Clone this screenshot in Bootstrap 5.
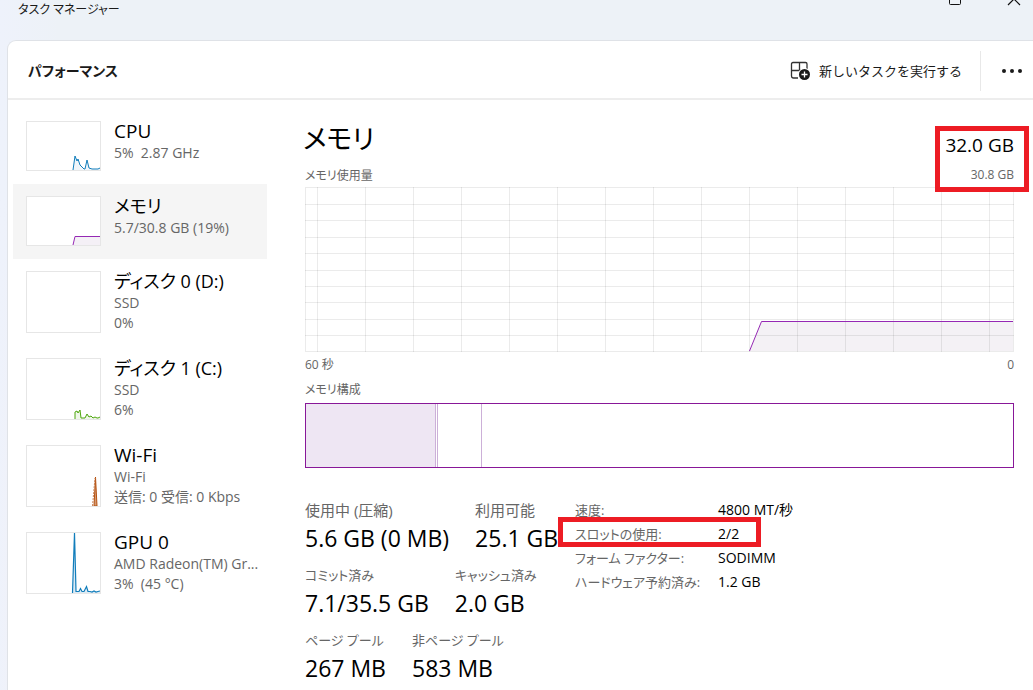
<!DOCTYPE html>
<html lang="ja">
<head>
<meta charset="utf-8">
<meta name="viewport" content="width=device-width, initial-scale=1">
<title>タスク マネージャー</title>
<link href="https://cdn.jsdelivr.net/npm/bootstrap@5.3.0/dist/css/bootstrap.min.css" rel="stylesheet">
<style>
  body { font-family: "Open Sans", "Noto Sans CJK JP", sans-serif; font-feature-settings: "palt"; color: #000; font-size: 14px; line-height: 20px; background: linear-gradient(90deg, #eef2fb 0, rgba(237,242,247,0) 60px), linear-gradient(#edf2f7 0, #edf2f7 42px, #edf2fb 200px, #f2f0f6 320px, #faefee 460px, #faeeee 100%); }
  h1, h2, p, dl, dd, dt { margin: 0; font-weight: 400; line-height: inherit; }
  .app { min-height: 100vh; overflow: hidden; }
  .titlebar { height: 40px; padding-left: 18px; color: #1a1a1a; }
  .titlebar-name { font-size: 12px; }
  .win-controls { margin-right: -10px; }
  .win-btn { width: 58px; height: 20px; padding: 0; border: 0; background: none; display: flex; justify-content: center; }
  .pane { margin-left: 7px; background: #fff; border: solid #dfe2e7; border-width: 1px 0 0 1px; border-top-left-radius: 9px; }
  .toolbar { height: 59px; border-bottom: 2px solid #ededed; padding: 2px 0 0 20px; }
  .toolbar h1 { font-size: 14px; font-weight: 600; color: #1a1a1a; }
  .tool-btn { border: 0; background: none; padding: 0; color: #1a1a1a; display: flex; align-items: center; font-size: 13px; }
  .tool-sep { width: 1px; height: 40px; background: #e8e8e8; margin-left: 18px; }
  .sidebar { width: 254px; margin: 9px 0 0 5px; flex: none; }
  .resource { color: #000; text-decoration: none; padding: 12px 0 13px 13px; gap: 13px; }
  .resource.active { background: #f5f5f5; }
  .thumb { width: 75px; height: 50px; border: 1px solid #e6e6e6; background: #fff; flex: none; display: block; }
  .thumb-tall { height: 62px; }
  .res-title { font-size: 19px; line-height: 20px; margin-bottom: 2px; }
  .res-kana { font-size: 18px; }
  .res-sub { font-size: 14px; color: #666; white-space: nowrap; }
  .detail { margin-left: 38px; padding: 17px 19px 0 0; min-width: 0; }
  .detail h2 { font-size: 27px; line-height: 44px; margin-left: -2px; }
  .caption { font-size: 12px; line-height: 18px; color: #666; padding-top: 4px; }
  .caption-top { padding: 6px 0 2px; }
  .caption-bar { padding: 7px 0 4px; }
  .total { position: absolute; right: 4px; top: 26px; border: 5px solid #ed1c24; padding: 4px 10px 0 5px; height: 66px; text-align: right; }
  .total-main { font-size: 19px; line-height: 20px; }
  .total-sub { font-size: 12px; line-height: 18px; color: #666; margin-top: 11px; }
  .graph { display: block; width: 100%; height: 165px; }
  .composition { height: 65px; border: 1px solid #881798; }
  .composition div { border-right: 1px solid #ccb0d8; }
  .stats { padding-top: 31px; }
  .stat-row { gap: 26px; margin-bottom: 11px; white-space: nowrap; }
  .stat-row dt { font-size: 13px; line-height: 22px; color: #666; }
  .stat-row .dt-kanji { font-size: 15px; }
  .stat-row dd { font-size: 23px; line-height: 29px; margin-top: 3px; }
  .specs { margin-left: 270px; position: absolute; left: 0; top: 30px; white-space: nowrap; }
  .specs th, .specs td { padding: 0; height: 24px; line-height: 24px; font-weight: 400; font-size: 14px; }
  .specs th { width: 143px; color: #666; font-size: 13px; }
  .mark-box { position: absolute; left: -17px; top: -5px; width: 203px; height: 30px; border: 5px solid #ed1c24; pointer-events: none; }
</style>
</head>
<body>
<div class="app d-flex flex-column">
  <header class="titlebar d-flex justify-content-between align-items-start">
    <span class="titlebar-name">タスク マネージャー</span>
    <div class="win-controls d-flex">
      <button class="win-btn" aria-label="最大化"><svg width="14" height="6" viewBox="0 0 14 6"><path d="M.5-7V3.500Q.5 4.500 1.500 4.500H10.500Q11.500 4.500 11.500 3.500V-7" fill="none" stroke="#111"/></svg></button>
      <button class="win-btn" aria-label="閉じる"><svg width="14" height="6" viewBox="0 0 14 6"><path d="M1 5 12-6M13 5 2-6" fill="none" stroke="#111" stroke-width="1.200"/></svg></button>
    </div>
  </header>

  <div class="pane flex-grow-1">
    <div class="toolbar d-flex align-items-center">
      <h1>パフォーマンス</h1>
      <button class="tool-btn ms-auto gap-2">
        <svg width="21" height="20" viewBox="0 0 21 20"><path d="M8 17H3.500Q1.500 17 1.500 15V3Q1.500 1.500 3 1.500H15.500Q17 1.500 17 3V8M9.500 1.500V9.500M1.500 9.500H9.500M9.500 9.500H17" fill="none" stroke="#333" stroke-width="1.300"/><circle cx="14.500" cy="13.500" r="6.500" fill="#fff"/><circle cx="14.500" cy="13.500" r="5.500" fill="#1a1a1a"/><path d="M14.500 10.500V16.500M11.500 13.500H17.500" stroke="#fff" stroke-width="1.300"/></svg>
        <span>新しいタスクを実行する</span>
      </button>
      <span class="tool-sep"></span>
      <button class="tool-btn px-2 ms-2" aria-label="その他"><svg width="28" height="6" viewBox="0 0 28 6" fill="#1a1a1a"><circle cx="7" cy="3" r="2"/><circle cx="15" cy="3" r="2"/><circle cx="23" cy="3" r="2"/></svg></button>
    </div>

    <div class="d-flex">
      <nav class="sidebar" aria-label="リソース">
        <a class="resource d-flex" href="#cpu">
          <svg class="thumb" viewBox="0 0 73 48"><path d="M46 48 48 34 50 38 51 37 54 45 57 48H58L60 38 62 46 65 47H71L73 46V48Z" fill="#eff5fa"/><path d="M46 48 48 34 50 39 51 37 53 43 57 47H58L60 38 62 46 65 47H71L73 46" fill="none" stroke="#117dbb"/></svg>
          <div><div class="res-title">CPU</div><div class="res-sub">5%&nbsp; 2.87 GHz</div></div>
        </a>
        <a class="resource active d-flex" href="#memory" aria-current="page">
          <svg class="thumb" viewBox="0 0 73 48"><path d="M46 48 48 39.500H73V48Z" fill="#f4f0f6"/><path d="M46 48 48 39.500H73" fill="none" stroke="#9528b4"/></svg>
          <div><div class="res-title res-kana">メモリ</div><div class="res-sub">5.7/30.8 GB (19%)</div></div>
        </a>
        <a class="resource d-flex" href="#disk0">
          <svg class="thumb thumb-tall" viewBox="0 0 73 60"></svg>
          <div><div class="res-title res-kana">ディスク 0 (D:)</div><div class="res-sub">SSD<br>0%</div></div>
        </a>
        <a class="resource d-flex" href="#disk1">
          <svg class="thumb thumb-tall" viewBox="0 0 73 60"><path d="M48 60V54L50 52 51 54 53 51 54 59H58L60 55 62 58 64 57 66 59H71L73 58V60Z" fill="#eff7e9"/><path d="M48 60V53L50 52 51 54 53 51 54 59H58L60 55 62 58 64 57 66 59 68 58 70 59H71L73 58" fill="none" stroke="#4da60c"/></svg>
          <div><div class="res-title res-kana">ディスク 1 (C:)</div><div class="res-sub">SSD<br>6%</div></div>
        </a>
        <a class="resource d-flex" href="#wifi">
          <svg class="thumb thumb-tall" viewBox="0 0 73 60"><path d="M67 60 68.500 31 70 60Z" fill="#d39a72" stroke="#b5500f"/><path d="M65.500 60 68 32" fill="none" stroke="#c9855a" stroke-dasharray="2 1"/></svg>
          <div><div class="res-title">Wi-Fi</div><div class="res-sub">Wi-Fi<br>送信: 0 受信: 0 Kbps</div></div>
        </a>
        <a class="resource d-flex" href="#gpu">
          <svg class="thumb thumb-tall" viewBox="0 0 73 60"><path d="M45.500 60 47.500 0 49 59H52L53.500 56 55 59H57L59.500 53.500 61 58.500H63L65 59 67 58 69 59 71 58.500 73 58V60Z" fill="#dcebf5"/><path d="M45.500 60 47.500 0 49 58.500H52L53.500 55.500 55 58.500H57L59.500 53.500 61 58.500H63L65 59 67 58 69 59 71 58.500 73 58" fill="none" stroke="#117dbb" stroke-width="1.200"/></svg>
          <div><div class="res-title">GPU 0</div><div class="res-sub">AMD Radeon(TM) Gr...<br>3%&nbsp; (45 °C)</div></div>
        </a>
      </nav>

      <main class="detail flex-grow-1 position-relative">
        <h2>メモリ</h2>
        <p class="caption caption-top">メモリ使用量</p>
        <svg class="graph" viewBox="0 0 709 165" preserveAspectRatio="none">
          <path d="M444.500 164 456.500 134.500H708V164Z" fill="#f4f1f5"/>
          <path d="M12.500 0V165M60.500 0V165M108.500 0V165M156.500 0V165M204.500 0V165M252.500 0V165M300.500 0V165M348.500 0V165M396.500 0V165M444.500 0V165M492.500 0V165M540.500 0V165M588.500 0V165M636.500 0V165M684.500 0V165M0 17.500H709M0 33.500H709M0 50.500H709M0 66.500H709M0 83.500H709M0 99.500H709M0 115.500H709M0 132.500H709M0 148.500H709M.5.5H708.500V164.500H.5Z" fill="none" stroke="#000" stroke-opacity=".08"/>
          <path d="M444.500 164 456.500 134.500H708" fill="none" stroke="#9528b4"/>
        </svg>
        <div class="caption d-flex justify-content-between"><span>60 秒</span><span>0</span></div>
        <p class="caption caption-bar">メモリ構成</p>
        <div class="composition d-flex">
          <div style="width:18.400%;background:#eee6f3"></div><div style="width:.3%"></div><div style="width:6.200%"></div>
        </div>

        <section class="stats position-relative">
          <dl class="stat-row d-flex"><div><dt class="dt-kanji">使用中 (圧縮)</dt><dd>5.6 GB (0 MB)</dd></div><div><dt class="dt-kanji">利用可能</dt><dd>25.1 GB</dd></div></dl>
          <dl class="stat-row d-flex"><div><dt>コミット済み</dt><dd>7.1/35.5 GB</dd></div><div><dt>キャッシュ済み</dt><dd>2.0 GB</dd></div></dl>
          <dl class="stat-row d-flex mb-0"><div><dt>ページ プール</dt><dd>267 MB</dd></div><div><dt>非ページ プール</dt><dd>583 MB</dd></div></dl>
          <table class="specs">
            <tr><th scope="row">速度:</th><td>4800 MT/秒</td></tr>
            <tr><th scope="row" class="position-relative">スロットの使用:<span class="mark-box"></span></th><td>2/2</td></tr>
            <tr><th scope="row">フォーム ファクター:</th><td>SODIMM</td></tr>
            <tr><th scope="row">ハードウェア予約済み:</th><td>1.2 GB</td></tr>
          </table>
        </section>
        <div class="total"><div class="total-main">32.0 GB</div><div class="total-sub">30.8 GB</div></div>
      </main>
    </div>
  </div>
</div>
<script src="https://cdn.jsdelivr.net/npm/bootstrap@5.3.0/dist/js/bootstrap.bundle.min.js"></script>
</body>
</html>
